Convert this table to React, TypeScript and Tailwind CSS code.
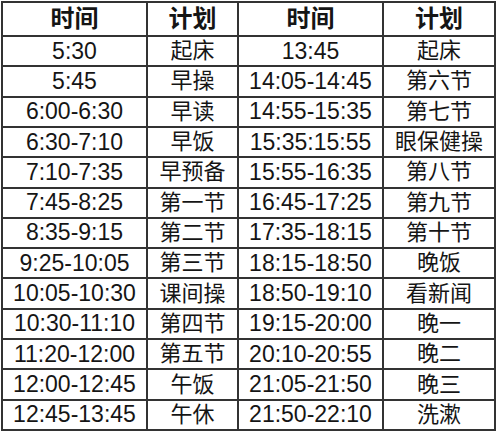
import React from 'react';

const rows: [string, string, string, string][] = [
    ['5:30', '起床', '13:45', '起床'],
    ['5:45', '早操', '14:05-14:45', '第六节'],
    ['6:00-6:30', '早读', '14:55-15:35', '第七节'],
    ['6:30-7:10', '早饭', '15:35:15:55', '眼保健操'],
    ['7:10-7:35', '早预备', '15:55-16:35', '第八节'],
    ['7:45-8:25', '第一节', '16:45-17:25', '第九节'],
    ['8:35-9:15', '第二节', '17:35-18:15', '第十节'],
    ['9:25-10:05', '第三节', '18:15-18:50', '晚饭'],
    ['10:05-10:30', '课间操', '18:50-19:10', '看新闻'],
    ['10:30-11:10', '第四节', '19:15-20:00', '晚一'],
    ['11:20-12:00', '第五节', '20:10-20:55', '晚二'],
    ['12:00-12:45', '午饭', '21:05-21:50', '晚三'],
    ['12:45-13:45', '午休', '21:50-22:10', '洗漱'],
];

const font = "font-['Liberation_Sans','Noto_Sans_CJK_SC',sans-serif]";

export default function App() {
    return (
        <div className={`w-[500px] h-[435px] bg-white pl-[1px] pt-[1px] ${font} text-[#151515]`}>
            <div className="grid grid-cols-[143px_89px_143px_110px] grid-rows-[32px_repeat(13,1fr)] h-[430px] w-[495px] gap-[2px] p-[2px] bg-[#333]">
                {['时间', '计划', '时间', '计划'].map((h, i) => (
                    <div key={i} className="bg-white flex items-center justify-center text-[24px] font-bold leading-none">
                        {h}
                    </div>
                ))}
                {rows.map((r, ri) =>
                    r.map((c, ci) => (
                        <div
                            key={`${ri}-${ci}`}
                            className={`bg-white flex items-center justify-center leading-none ${ci % 2 === 0 ? 'text-[23px]' : 'text-[22px]'}`}
                        >
                            {c}
                        </div>
                    ))
                )}
            </div>
        </div>
    );
}
